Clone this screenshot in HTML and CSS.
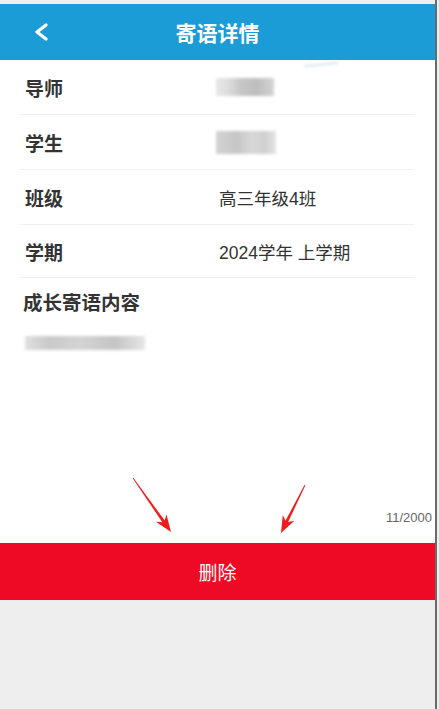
FILE: index.html
```html
<html lang="zh-CN">
<head>
    <meta charset="UTF-8">
    <meta name="viewport" content="width=device-width, initial-scale=1.0">
    <title>寄语详情</title>
    <link rel="stylesheet" href="styles.css">
</head>
<body>
    <div id="page">
        <div class="nav">
            <div class="nav-left">
                <svg class="back" width="16" height="18" viewBox="0 0 16 18">
                    <polyline points="12,2 3,9 12,16" fill="none" stroke="#fff" stroke-width="3.2" stroke-linecap="round" stroke-linejoin="round"/>
                </svg>
            </div>
            <div class="nav-title">寄语详情</div>
            <div></div>
        </div>

        <div class="info">
            <div class="row">
                <span class="label">导师</span>
                <span class="value"><span class="blur blur-name"></span><span class="blur-line"></span></span>
            </div>
            <div class="row">
                <span class="label">学生</span>
                <span class="value"><span class="blur blur-student"></span></span>
            </div>
            <div class="row">
                <span class="label">班级</span>
                <span class="value">高三年级4班</span>
            </div>
            <div class="row">
                <span class="label">学期</span>
                <span class="value">2024学年 上学期</span>
            </div>
        </div>

        <div class="content">
            <div class="content-title">成长寄语内容</div>
            <div class="content-text"><span class="blur blur-text"></span></div>
            <div class="counter">11/2000</div>
        </div>

        <button class="delete">删除</button>

        <svg class="marks" width="437" height="709" viewBox="0 0 437 709">
            <polygon fill="#f21c1c" points="132.7,478.2 162.3,522.2 155.9,521.8 171,532 166.5,514.4 164.7,520.5 133.3,477.8"/>
            <polygon fill="#f21c1c" points="304.6,484.8 285.5,520.7 282.8,514.9 281,533 294.4,520.7 288.1,522.1 305.4,485.2"/>
        </svg>
    </div>
</body>
</html>
```

FILE: styles.css
```css
body {
    margin: 0;
    background-color: #eeeeee;
    font-family: "Liberation Sans", "Noto Sans CJK SC", sans-serif;
    color: #333;
}
#page {
    position: relative;
    width: 437px;
    min-height: 709px;
    border-right: 2px solid #6b6b6b;
    padding-top: 4px;
    box-sizing: border-box;
}
.nav {
    height: 56px;
    background-color: #1b9cd7;
    display: grid;
    grid-template-columns: 1fr auto 1fr;
    align-items: center;
}
.nav-left {
    padding-left: 34px;
    display: flex;
    align-items: center;
}
.nav-title {
    color: #fff;
    font-size: 21px;
    font-weight: bold;
}
.info {
    background-color: #fff;
}
.row {
    margin: 0 21px 0 20px;
    height: 55px;
    box-sizing: border-box;
    border-bottom: 1px solid #f0f0f0;
    display: flex;
    align-items: center;
}
.row:last-child {
    height: 53px;
}
.label {
    width: 194px;
    padding-left: 5px;
    font-size: 19px;
    font-weight: bold;
}
.value {
    font-size: 17.5px;
    position: relative;
    display: flex;
    align-items: center;
}
.blur {
    display: inline-block;
    filter: blur(1.5px);
}
.blur-name {
    width: 58px;
    height: 18px;
    margin-left: -3px;
    background: linear-gradient(90deg, #e6e6e6 0%, #dedede 20%, #c8c8c8 40%, #bdbdbd 70%, #d4d4d4 100%);
}
.blur-line {
    position: absolute;
    left: 85px;
    top: -15px;
    width: 34px;
    height: 3px;
    background-color: #e4eef3;
    transform: rotate(-6deg);
    filter: blur(1px);
}
.blur-student {
    width: 60px;
    height: 23px;
    margin-left: -3px;
    background: linear-gradient(90deg, #d2d2d2 0%, #c6c6c6 35%, #d8d8d8 60%, #cfcfcf 80%, #e4e4e4 100%);
}
.content {
    background-color: #fff;
    height: 265px;
    box-sizing: border-box;
    padding: 12px 3px 16px 23px;
    display: flex;
    flex-direction: column;
}
.content-title {
    font-size: 19.5px;
    font-weight: bold;
    line-height: 26px;
}
.content-text {
    margin-top: 20px;
    height: 20px;
}
.blur-text {
    width: 120px;
    height: 14px;
    margin-left: 2px;
    background: linear-gradient(90deg, #e0e0e0 0%, #c9c9c9 20%, #d4d4d4 45%, #c4c4c4 75%, #e6e6e6 100%);
}
.counter {
    margin-top: auto;
    align-self: flex-end;
    font-size: 13px;
    line-height: 18px;
    color: #666;
}
.delete {
    display: block;
    width: 100%;
    height: 57px;
    border: none;
    background-color: #ee0a24;
    color: #fff;
    font-family: "Liberation Sans", "Noto Sans CJK SC", sans-serif;
    font-size: 19px;
    padding: 0;
}
.marks {
    position: absolute;
    top: 0;
    left: 0;
    pointer-events: none;
}
```
